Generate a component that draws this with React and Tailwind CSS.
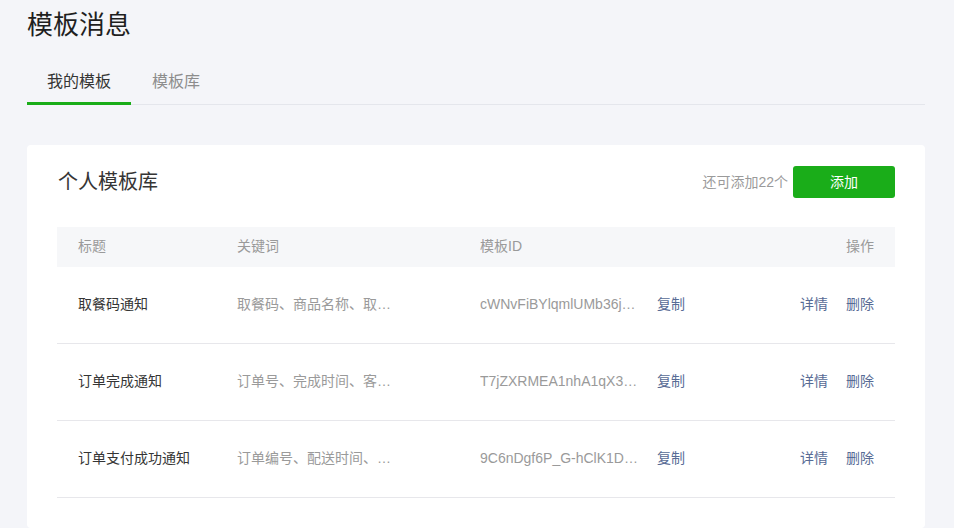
import React from 'react';

const templates = [
  { title: '取餐码通知', keywords: '取餐码、商品名称、取餐地点、下单时间', id: 'cWNvFiBYlqmlUMb36jKx8Q2sd9LrTzq0Wc' },
  { title: '订单完成通知', keywords: '订单号、完成时间、客户名称、金额', id: 'T7jZXRMEA1nhA1qX3tGb0LpQs8vYwMe2Hk' },
  { title: '订单支付成功通知', keywords: '订单编号、配送时间、支付金额', id: '9C6nDgf6P_G-hClK1DaT3wYzLmR5sQpNo' },
];

const App = () => {
  return (
    <div
      className="min-h-screen bg-[#f4f5f9] pl-[27px] pr-[29px] pt-[7px] text-[#353535]"
      style={{ fontFamily: '"Liberation Sans", "Noto Sans CJK SC", sans-serif' }}
    >
      {/* Page title */}
      <h1 className="text-[26px] leading-[36px] font-normal text-[#1f1f1f]">模板消息</h1>

      {/* Tabs */}
      <div className="mt-[19px] flex border-b border-[#e4e6ec] pr-[2px]">
        <div className="-mb-px px-[20px] h-[43px] leading-[40px] text-[16px] text-[#353535] border-b-[3px] border-[#1aad19]">
          我的模板
        </div>
        <div className="px-[21px] h-[42px] leading-[40px] text-[16px] text-[#8d8d8d]">模板库</div>
      </div>

      {/* Card */}
      <div className="mt-[40px] bg-white rounded-[4px] px-[30px] pt-[21px] pb-[30px]">
        <div className="flex items-center justify-between">
          <h2 className="pl-px text-[20px] font-normal text-[#353535]">个人模板库</h2>
          <div className="flex items-center gap-[5px]">
            <span className="text-[14px] text-[#9a9a9a]">还可添加22个</span>
            <button className="w-[102px] h-[32px] rounded-[3px] bg-[#1aad19] text-white text-[14px]">添加</button>
          </div>
        </div>

        {/* Table */}
        <div className="mt-[29px]">
          <div className="flex items-center h-[40px] pb-[2px] bg-[#f6f7f9] px-[21px] text-[14px] text-[#9a9a9a]">
            <div className="w-[159px]">标题</div>
            <div className="w-[243px]">关键词</div>
            <div className="flex-1">模板ID</div>
            <div>操作</div>
          </div>
          {templates.map((t) => (
            <div key={t.id} className="flex items-center h-[77px] pb-px border-b border-[#e7e7eb] px-[21px] text-[14px]">
              <div className="w-[159px] text-[#353535]">{t.title}</div>
              <div className="w-[243px]">
                <div className="w-[156px] truncate text-[#9a9a9a]">{t.keywords}</div>
              </div>
              <div className="flex-1 flex items-center">
                <div className="w-[160px] truncate text-[#9a9a9a]">{t.id}</div>
                <a className="ml-[17px] text-[#576b95] cursor-pointer">复制</a>
              </div>
              <div className="flex items-center gap-[18px] text-[#576b95]">
                <a className="cursor-pointer">详情</a>
                <a className="cursor-pointer">删除</a>
              </div>
            </div>
          ))}
        </div>
      </div>
    </div>
  );
};

export default App;
